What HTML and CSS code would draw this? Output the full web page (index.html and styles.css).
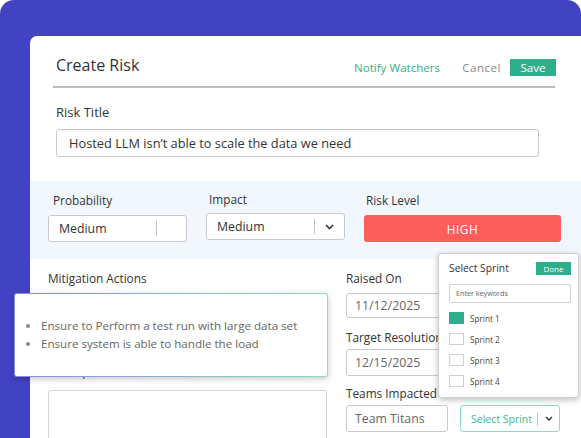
FILE: index.html
```html
<!DOCTYPE html>
<html lang="en">
<head>
    <meta charset="UTF-8">
    <meta name="viewport" content="width=device-width, initial-scale=1.0">
    <title>Create Risk</title>
    <link rel="stylesheet" href="styles.css">
</head>
<body>
    <div class="frame">
        <div class="card">
            <div class="head">
                <h1 class="title">Create Risk</h1>
                <div class="actions">
                    <a class="notify">Notify Watchers</a>
                    <a class="cancel">Cancel</a>
                    <button class="btn-save">Save</button>
                </div>
            </div>
            <div class="divider"></div>

            <div class="title-field">
                <label>Risk Title</label>
                <div class="input risk-title">Hosted LLM isn’t able to scale the data we need</div>
            </div>

            <div class="band">
                <div class="field">
                    <label class="lbl-prob">Probability</label>
                    <div class="input select">
                        <span class="val">Medium</span>
                        <span class="sep"></span>
                        <span class="caret"></span>
                    </div>
                </div>
                <div class="field">
                    <label class="lbl-impact">Impact</label>
                    <div class="input select impact">
                        <span class="val">Medium</span>
                        <span class="sep"></span>
                        <span class="caret">
                            <svg width="9" height="6" viewBox="0 0 9 6"><path d="M1 1l3.5 3.5L8 1" fill="none" stroke="#333" stroke-width="1.6"/></svg>
                        </span>
                    </div>
                </div>
                <div class="field level">
                    <label class="lbl-level">Risk Level</label>
                    <div class="level-badge">HIGH</div>
                </div>
            </div>

            <div class="lower">
                <div class="col-left">
                    <label>Mitigation Actions</label>
                    <div class="input actions-box"></div>
                    <label class="lbl-desc">Description</label>
                    <div class="input textarea"></div>

                    <!-- expanded list of mitigation actions -->
                    <div class="popover">
                        <ul>
                            <li>Ensure to Perform a test run with large data set</li>
                            <li>Ensure system is able to handle the load</li>
                        </ul>
                    </div>
                </div>

                <div class="col-right">
                    <label>Raised On</label>
                    <div class="input date raised">11/12/2025</div>
                    <label class="lbl-target">Target Resolution</label>
                    <div class="input date">12/15/2025</div>
                    <label class="lbl-teams">Teams Impacted</label>
                    <div class="teams-row">
                        <div class="input team">Team Titans</div>
                        <div class="input sprint-select">
                            <span class="val">Select Sprint</span>
                            <span class="sep"></span>
                            <span class="caret">
                                <svg width="8" height="5" viewBox="0 0 8 5"><path d="M1 1l3 3 3-3" fill="none" stroke="#333" stroke-width="1.4"/></svg>
                            </span>
                        </div>
                    </div>

                    <!-- sprint picker -->
                    <div class="sprint-menu">
                        <div class="menu-head">
                            <span>Select Sprint</span>
                            <button class="btn-done">Done</button>
                        </div>
                        <div class="search">Enter keywords</div>
                        <div class="opt"><span class="box checked"></span>Sprint 1</div>
                        <div class="opt"><span class="box"></span>Sprint 2</div>
                        <div class="opt"><span class="box"></span>Sprint 3</div>
                        <div class="opt"><span class="box"></span>Sprint 4</div>
                    </div>
                </div>
            </div>
        </div>
    </div>
</body>
</html>
```

FILE: styles.css
```css
* {
    box-sizing: border-box;
}
body {
    margin: 0;
    background: #fff;
    font-family: "Open Sans", "Liberation Sans", sans-serif;
    color: #333;
}
label {
    display: block;
    font-size: 11.8px;
    line-height: 16px;
    color: #333;
}
.frame {
    width: 581px;
    height: 438px;
    background: #4243c3;
    border-radius: 14px 14px 0 0;
    padding: 36px 0 0 30px;
    overflow: hidden;
}
.card {
    background: #fff;
    border-radius: 7px 0 0 0;
    height: 402px;
}

/* header */
.head {
    display: flex;
    justify-content: space-between;
    align-items: flex-start;
    padding: 19px 25px 0 26px;
}
.title {
    margin: 0;
    font-size: 16px;
    font-weight: 400;
    line-height: 20px;
    color: #333;
}
.actions {
    display: flex;
    align-items: center;
    margin-top: 4px;
    height: 17px;
    font-size: 11.6px;
}
.notify {
    color: #34b08f;
}
.cancel {
    color: #888;
    margin-left: 22px;
    letter-spacing: 0.5px;
}
.btn-save {
    margin-left: 9px;
    width: 46px;
    height: 17px;
    padding: 0;
    border: none;
    background: #2eae8b;
    color: #fff;
    font-family: inherit;
    font-size: 11.6px;
}
.divider {
    margin: 10px 0 0 23px;
    width: 502px;
    height: 2px;
    background: #bdbdbd;
}

/* inputs */
.input {
    border: 1px solid #c9c9c9;
    border-radius: 3px;
    background: #fff;
    font-size: 12.3px;
    color: #333;
    display: flex;
    align-items: center;
}
.title-field {
    margin: 16px 0 0 26px;
}
.title-field label {
    font-size: 13px;
}
.risk-title {
    margin-top: 9px;
    width: 483px;
    height: 28px;
    padding-left: 12px;
    font-size: 12.8px;
}

/* probability / impact / level */
.band {
    margin-top: 24px;
    height: 78px;
    background: #f2f6fd;
    display: flex;
    gap: 19px;
    padding: 11px 0 0 18px;
}
.field label {
    margin-bottom: 7px;
    padding-left: 5px;
}
.lbl-impact {
    margin-top: -1px;
    padding-left: 3px !important;
}
.lbl-level {
    padding-left: 2px !important;
}
.select {
    width: 139px;
    height: 27px;
    padding-left: 10px;
}
.select .val {
    flex: 1;
}
.sep {
    width: 1px;
    height: 15px;
    background: #c4c4c4;
}
.select .caret {
    width: 29px;
    display: flex;
    justify-content: center;
}
.impact {
    margin-top: -1px;
}
.level-badge {
    width: 197px;
    height: 27px;
    border-radius: 3px;
    background: #fe5d5d;
    color: #fff;
    font-size: 11.8px;
    letter-spacing: 0.5px;
    display: flex;
    align-items: center;
    justify-content: center;
}

/* lower columns */
.lower {
    display: flex;
    gap: 19px;
    padding: 11px 0 0 18px;
}
.col-left {
    position: relative;
    width: 279px;
}
.actions-box {
    margin-top: 7px;
    height: 60px;
}
.lbl-desc {
    margin-top: 10px;
}
.textarea {
    margin-top: 11px;
    height: 80px;
    border-color: #d6d6d6;
}
.popover {
    position: absolute;
    left: -34px;
    top: 23px;
    width: 314px;
    height: 84px;
    border: 1px solid transparent;
    border-radius: 3px;
    background: linear-gradient(#fff, #fff) padding-box,
                linear-gradient(90deg, #8b8dd9, #8fd8c6) border-box;
    box-shadow: 0 2px 6px rgba(0, 0, 0, 0.22);
}
.popover ul {
    margin: 0;
    padding: 23px 0 0 26px;
    font-size: 11.6px;
    line-height: 18px;
    color: #666;
}
.popover li::marker {
    color: #888;
}

.col-right {
    position: relative;
    width: 214px;
}
.date {
    margin-top: 7px;
    height: 25px;
    padding-left: 8px;
    color: #666;
}
.lbl-target + .date {
    margin-top: 4px;
    height: 27px;
}
.lbl-target {
    margin-top: 11px;
}
.lbl-teams {
    margin-top: 9px;
}
.teams-row {
    display: flex;
    gap: 12px;
    margin-top: 4px;
}
.team {
    width: 102px;
    height: 27px;
    padding-left: 8px;
    color: #666;
}
.sprint-select {
    width: 100px;
    height: 27px;
    padding-left: 10px;
    border-color: #8fdcc6;
    color: #3cb897;
    font-size: 10.5px;
}
.sprint-select .val {
    flex: 1;
}
.sprint-select .sep {
    height: 14px;
}
.sprint-select .caret {
    width: 21px;
    display: flex;
    justify-content: center;
}

/* sprint dropdown */
.sprint-menu {
    position: absolute;
    left: 92px;
    top: -17px;
    width: 141px;
    height: 145px;
    background: #fff;
    border: 1px solid #cfcfcf;
    border-radius: 3px;
    box-shadow: 0 2px 6px rgba(0, 0, 0, 0.25);
    padding: 7px 7px 0 10px;
}
.menu-head {
    display: flex;
    justify-content: space-between;
    align-items: center;
    font-size: 10.3px;
    color: #333;
}
.btn-done {
    width: 35px;
    height: 13px;
    padding: 0;
    border: none;
    background: #2eae8b;
    color: #fff;
    font-family: inherit;
    font-size: 8px;
}
.search {
    margin-top: 9px;
    width: 122px;
    height: 19px;
    border: 1px solid #d3d3d3;
    border-radius: 2px;
    padding-left: 6px;
    font-size: 7.2px;
    line-height: 17px;
    color: #666;
}
.opt {
    display: flex;
    align-items: center;
    height: 12px;
    margin-top: 9px;
    font-size: 8.2px;
    color: #444;
}
.opt:first-of-type {
    margin-top: 7px;
}
.box {
    width: 15px;
    height: 12px;
    border: 1px solid #cfcfcf;
    margin-right: 6px;
}
.box.checked {
    background: #2fae8c;
    border-color: #2fae8c;
}
```
